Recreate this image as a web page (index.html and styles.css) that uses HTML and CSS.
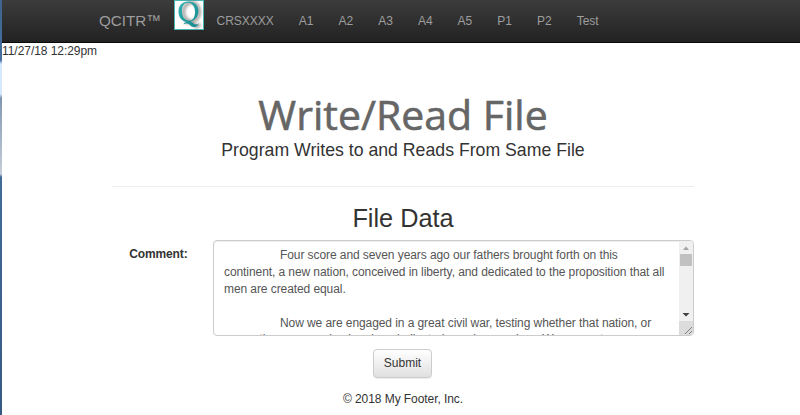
FILE: index.html
```html
<!DOCTYPE html>
<html lang="en">
<head>
<meta charset="utf-8">
<title>Write/Read File</title>
<link rel="stylesheet" href="styles.css">
</head>
<body>
<div class="edge"></div>
<div class="page">
  <nav class="navbar">
    <a class="brand">QCITR™</a>
    <svg class="logo" viewBox="0 0 30 30">
      <defs>
        <filter id="soft" x="-40%" y="-40%" width="180%" height="180%"><feGaussianBlur stdDeviation="1.7"/></filter>
        <linearGradient id="teal" x1="0" y1="0" x2="1" y2="1"><stop offset="0" stop-color="#36b3b1"/><stop offset="1" stop-color="#13898e"/></linearGradient>
      </defs>
      <rect x=".5" y=".5" width="29" height="29" fill="#fff" stroke="#48b5b3"/>
      <g fill="none" stroke="#77716d" opacity=".7" filter="url(#soft)">
        <ellipse cx="17.500" cy="12" rx="8" ry="9.500" stroke-width="3"/>
        <path d="M12 23q5-2 8 2t6-1" stroke-width="3"/>
      </g>
      <path fill="url(#teal)" fill-rule="evenodd" d="M14.500 1.500C20.500 1.500 24.500 5.500 24.500 11C24.500 16.500 21 20.500 16.500 21.500C19 22 19.500 24.500 22 24.500C23.200 24.500 24 24 24.800 23.200C24.200 25.600 22.500 27 20 27C16.500 27 15.500 23.500 13 23.500C11.500 23.500 10.500 24 9.500 24.500C10 23.200 11 22.300 12.500 22C7.500 21.200 4.500 17 4.500 11.500C4.500 5.200 8.500 1.500 14.500 1.500ZM14 2.800C10 2.800 8 5.800 8 10.800C8 16.800 10.800 20.600 15 20.600C19 20.600 21 17 21 12C21 6.200 18 2.800 14 2.800Z"/>
    </svg>
    <a>CRSXXXX</a><a>A1</a><a>A2</a><a>A3</a><a>A4</a><a>A5</a><a>P1</a><a>P2</a><a>Test</a>
  </nav>
  <div class="stamp">11/27/18 12:29pm</div>
  <main class="container">
    <header class="header">
      <h1>Write/Read File</h1>
      <p class="lead">Program Writes to and Reads From Same File</p>
    </header>
    <h2>File Data</h2>
    <form class="form">
      <div class="row">
        <label>Comment:</label>
        <div class="control">
          <div class="text">
            <div class="indent">Four score and seven years ago our fathers brought forth on this</div>
            <div>continent, a new nation, conceived in liberty, and dedicated to the proposition that all</div>
            <div>men are created equal.</div>
            <div>&nbsp;</div>
            <div class="indent">Now we are engaged in a great civil war, testing whether that nation, or</div>
            <div class="last">any nation so conceived and so dedicated, can long endure. We are met on a</div>
          </div>
          <div class="scroll">
            <svg class="arrow" viewBox="0 0 14 12"><path d="M4 9l3-3.500L10 9z" fill="#a3a3a3"/></svg>
            <div class="thumb"></div>
            <svg class="arrow down" viewBox="0 0 14 12"><path d="M3.500 5h7L7 8.500z" fill="#404040"/></svg>
            <svg class="grip" viewBox="0 0 14 14"><path d="M6 13l7-7M10 13l3-3" stroke="#808080" stroke-width="1"/></svg>
          </div>
        </div>
      </div>
      <button type="button">Submit</button>
    </form>
    <footer>© 2018 My Footer, Inc.</footer>
  </main>
</div>
</body>
</html>
```
FILE: styles.css
```css
* { box-sizing: border-box; }
body {
  margin: 0;
  display: flex;
  height: 415px;
  overflow: hidden;
  background: #fff;
  color: #333;
  font: 12px/17px "Liberation Sans", Arial, sans-serif;
}
h1, h2, p { margin: 0; font-weight: 400; white-space: nowrap; }
.edge {
  width: 2px;
  flex: none;
  background: linear-gradient(#3e648f 0, #44709f 60px, #d5e8ff 64px, #d5e8ff 94px, #8197b0 98px, #c5ced8 174px, #426b98 177px, #365a83 415px);
}
.page { flex: 1; min-width: 0; }
.navbar {
  display: flex;
  height: 43px;
  padding-left: 97px;
  border-bottom: 1px solid #080808;
  background: linear-gradient(#3c3c3c, #222);
  color: #9d9d9d;
}
.navbar a { padding: 13px 12.5px 0; white-space: nowrap; }
.navbar .brand { width: 75px; padding: 12px 0 0; font-size: 15.2px; }
.logo { width: 30px; height: 30px; flex: none; }
.stamp { height: 17px; letter-spacing: -.05px; }
.container { width: 582px; margin-left: 110px; text-align: center; }
.header { height: 127px; padding-top: 30px; border-bottom: 1px solid #eee; }
h1 {
  height: 49px;
  color: #666;
  font: 41px/48px "Open Sans", sans-serif;
  -webkit-text-stroke: .6px #666;
}
.lead { height: 22px; font-size: 17.7px; line-height: 22px; }
h2 { margin-top: 17px; font-size: 25.3px; line-height: 28px; }
.form { margin-top: 8px; }
.row { display: flex; }
label { width: 75.5px; margin-right: 25.5px; padding-top: 6px; text-align: right; font-weight: 700; letter-spacing: -.13px; }
.control {
  display: flex;
  width: 481px;
  height: 96px;
  overflow: hidden;
  border: 1px solid #ccc;
  border-radius: 4px;
  box-shadow: inset 0 1px 1px rgba(0,0,0,.075);
  color: #555;
  text-align: left;
}
.text { flex: 1; min-width: 0; padding: 6px 10px 0; white-space: nowrap; letter-spacing: -.08px; }
.indent { padding-left: 56px; }
.last { margin-top: -1px; }
.scroll { display: flex; flex: none; flex-direction: column; width: 14px; background: #f0f0f0; }
.arrow { width: 14px; height: 12px; }
.thumb { width: 12px; height: 12px; margin: 1px; background: #c1c1c1; }
.down { margin-top: auto; }
.grip { width: 14px; height: 14px; margin-top: 1px; background: #dcdcdc; }
button {
  display: block;
  width: 59px;
  height: 29px;
  margin: 13px 0 0 261px;
  padding: 0;
  border: 1px solid #ccc;
  border-radius: 4px;
  background: linear-gradient(#fff, #e0e0e0);
  box-shadow: inset 0 1px 0 rgba(255,255,255,.15), 0 1px 1px rgba(0,0,0,.075);
  color: #333;
  font: inherit;
  text-align: center;
}
footer { margin-top: 13px; letter-spacing: -.07px; }
```
